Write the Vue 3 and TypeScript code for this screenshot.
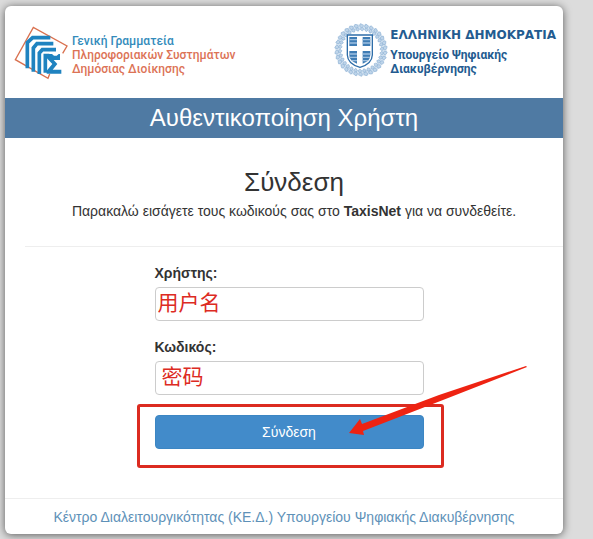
<script setup lang="ts">
import { ref } from 'vue'

const username = ref<string>('用户名')
const password = ref<string>('密码')

const leaves: number[] = Array.from({ length: 30 }, (_, i) => i * 12)
</script>

<template>
  <main class="card">
    <header class="brands">
      <div class="brand secretariat">
        <svg class="gsis" viewBox="6 6 162 162" aria-hidden="true">
          <path d="M152 88 L165 66 L64 10 L10 107 L108 163 L113 150" fill="none" stroke="#d9714f" stroke-width="4" />
          <g fill="none" stroke="#1f83c0" stroke-width="11">
            <path d="M46 133 V56 L62 41 H115" />
            <path d="M64 143 V72 L75 59 H124" />
            <path d="M82 150 V87 L91 77 H132" />
            <path d="M100 146 V95 H112" />
          </g>
          <path d="M104 90 H120 L126 95 H134 L140 90 H144 V108 H125 L136 120 L122 137 H148 V149 H104 V140 L121 120 L104 102 Z" fill="#1f83c0" />
        </svg>
        <p class="org">
          <span class="blue">Γενική Γραμματεία</span>
          <span>Πληροφοριακών Συστημάτων</span>
          <span>Δημόσιας Διοίκησης</span>
        </p>
      </div>
      <div class="brand republic">
        <svg class="emblem" viewBox="0 7 162 162" aria-hidden="true">
          <circle cx="81" cy="88" r="69" fill="none" stroke="#d3e2f0" stroke-width="16" />
          <g fill="#bfd5ea" stroke="#93b5d6" stroke-width="2">
            <g v-for="a in leaves" :key="a" :transform="`rotate(${a} 81 88)`">
              <path d="M79 9 Q94 13 83 22 Q73 18 79 9Z" />
              <path d="M82 20 Q94 22 85 31 Q75 27 82 20Z" />
            </g>
          </g>
          <path d="M40 43 H115 V103 Q114 130 78 140 Q41 130 40 103 Z" fill="#fff" stroke="#2f6ea9" stroke-width="4" />
          <path d="M46 49 H69 V76 H46Z M86 49 H109 V76 H86Z M46 91 H69 V129 Q46 121 46 103Z M86 91 H109 V103 Q109 121 86 129Z" fill="#3f7cb4" />
          <path d="M46 57 H69 M46 67 H69 M86 57 H109 M86 67 H109 M46 100 H69 M47 110 H69 M53 120 H69 M86 100 H109 M86 110 H108 M86 120 H103" stroke="#9dbfdf" stroke-width="4" />
        </svg>
        <div class="ministry">
          <strong>ΕΛΛΗΝΙΚΗ ΔΗΜΟΚΡΑΤΙΑ</strong>
          <p>Υπουργείο Ψηφιακής<br />Διακυβέρνησης</p>
        </div>
      </div>
    </header>

    <h1>Αυθεντικοποίηση Χρήστη</h1>

    <section class="intro">
      <h2>Σύνδεση</h2>
      <p>Παρακαλώ εισάγετε τους κωδικούς σας στο <b>TaxisNet</b> για να συνδεθείτε.</p>
    </section>

    <form @submit.prevent>
      <label for="username">Χρήστης:</label>
      <input id="username" v-model="username" type="text" autocomplete="off" />
      <label for="password">Κωδικός:</label>
      <input id="password" v-model="password" class="second" type="text" autocomplete="off" />
      <div class="action">
        <button type="submit">Σύνδεση</button>
        <span class="highlight"></span>
        <svg class="arrow" viewBox="0 0 178 70" aria-hidden="true">
          <path d="M0 67 L11 53 L13 58 L90 29 L177 0 L178 1 L94 34 L14 65 L15 69 Z" fill="#ee2312" />
        </svg>
      </div>
    </form>

    <footer>
      <a href="#">Κέντρο Διαλειτουργικότητας (ΚΕ.Δ.) Υπουργείου Ψηφιακής Διακυβέρνησης</a>
    </footer>
  </main>
</template>

<style>
body {
  background: #dcdcdc;
}
</style>

<style scoped>
* {
  box-sizing: border-box;
}
.card {
  margin: 6px 30px 5px 5px;
  background: #fff;
  border-radius: 6px;
  box-shadow: 0 1px 8px rgba(0, 0, 0, 0.6);
  color: #333;
  font-family: "Liberation Sans", Arial, sans-serif;
  font-size: 14px;
}
h1, h2, p {
  margin: 0;
  font-weight: 400;
}
.brands {
  display: flex;
  justify-content: space-between;
  height: 92px;
  padding: 17px 7px 0 9px;
}
.brand {
  display: flex;
  align-items: flex-start;
  white-space: nowrap;
}
.secretariat {
  gap: 4px;
  padding-top: 3px;
}
.gsis,
.emblem {
  width: 54px;
  height: 54px;
  flex: none;
}
.org {
  display: flex;
  flex-direction: column;
  padding-top: 8px;
  font: 500 12px/14px Roboto, sans-serif;
  color: #dc7356;
}
.blue {
  color: #338bbb;
}
.republic {
  gap: 2px;
  color: #235b90;
}
.ministry strong {
  display: block;
  padding-top: 3px;
  font-family: "DejaVu Sans", sans-serif;
  font-size: 12px;
  line-height: 18px;
}
.ministry p {
  padding-top: 4px;
  font-family: Roboto, sans-serif;
  font-size: 12px;
  font-weight: 700;
  line-height: 14px;
}
h1 {
  background: #4f7aa3;
  color: #fff;
  font-size: 24px;
  line-height: 40px;
  text-align: center;
}
.intro {
  margin-left: 20px;
  padding: 28px 0 24px;
  border-bottom: 1px solid #eee;
  text-align: center;
}
h2 {
  font-size: 26px;
  line-height: 32px;
}
.intro p {
  line-height: 26px;
  margin-bottom: -2px;
}
form {
  width: 50%;
  max-width: 269px;
  margin: 16px auto 0;
  position: relative;
  left: 5px;
}
label {
  display: block;
  height: 24px;
  font-weight: 700;
  line-height: 20px;
}
input {
  display: block;
  width: 100%;
  height: 34px;
  margin-bottom: 16px;
  padding: 0 2px 7px;
  border: 1px solid #ccc;
  border-radius: 4px;
  background: #fff;
  color: #dd2b23;
  font: 21px "Noto Sans CJK SC", sans-serif;
}
.second {
  margin-bottom: 20px;
  padding-left: 6px;
}
.action {
  position: relative;
}
button {
  display: block;
  width: 100%;
  height: 34px;
  border: 1px solid #3c86c3;
  border-radius: 4px;
  background: #428bca;
  color: #fff;
  font: 14px "Liberation Sans", Arial, sans-serif;
}
.highlight {
  position: absolute;
  inset: -11px -20px -19px -18px;
  border: 3px solid #dc2b20;
  border-radius: 3px;
  pointer-events: none;
}
.arrow {
  position: absolute;
  top: -49px;
  right: -103px;
  width: 178px;
  height: 70px;
  pointer-events: none;
}
footer {
  margin-top: 49px;
  padding: 8px 0 7px;
  border-top: 1px solid #eee;
  line-height: 20px;
  text-align: center;
}
footer a {
  color: #5e91b8;
  text-decoration: none;
}
</style>
